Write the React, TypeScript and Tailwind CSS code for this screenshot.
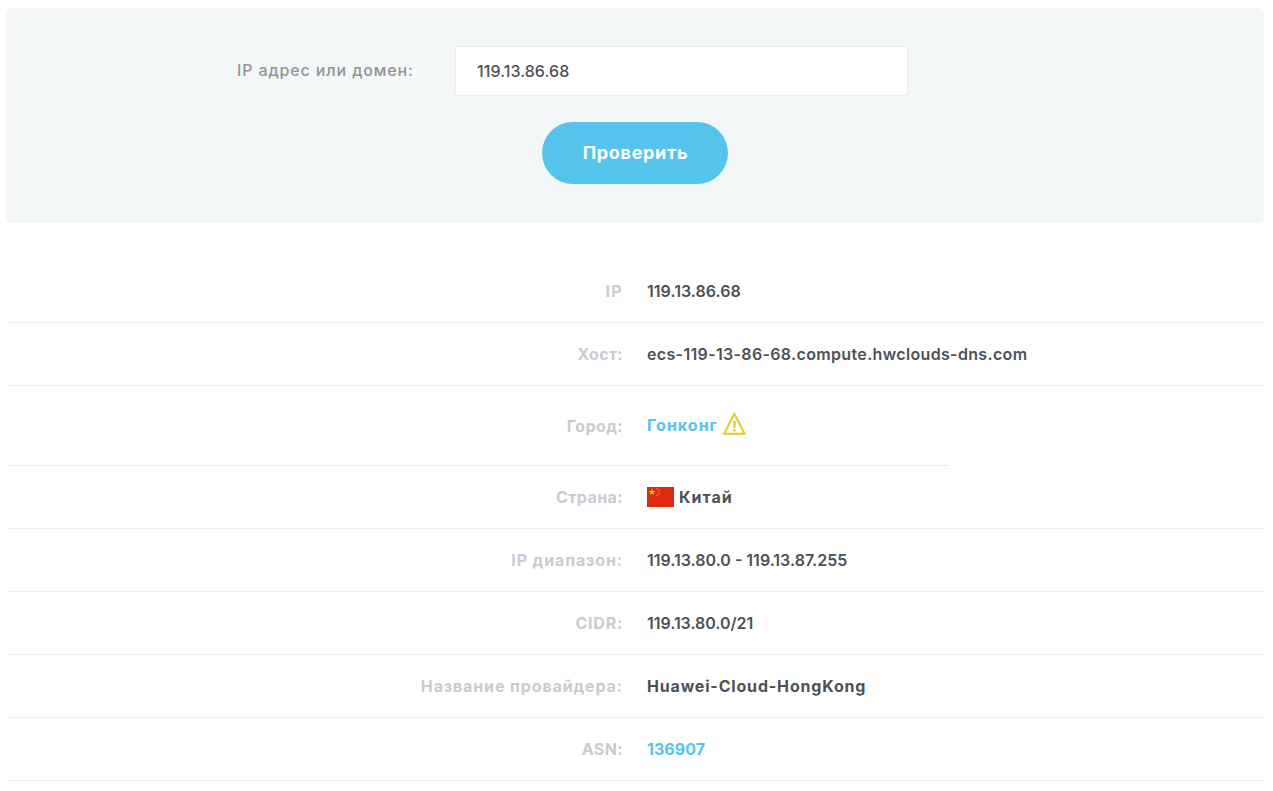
import type { ReactNode } from "react";

type RowProps = {
  label: string;
  labelSpacing: string;
  className?: string;
  children: ReactNode;
};

function Row({ label, labelSpacing, className = "h-[63px] w-full", children }: RowProps) {
  return (
    <div className={`flex items-center border-b border-[#ededee] ${className}`}>
      <div className={`w-[617px] shrink-0 text-right font-bold text-[#c8ccd1] ${labelSpacing}`}>{label}</div>
      <div className="ml-6 flex items-center whitespace-nowrap font-semibold text-[#4c5157]">{children}</div>
    </div>
  );
}

function WarningIcon() {
  return (
    <svg className="mb-[4px] ml-[4px] h-6 w-6" viewBox="0 0 24 24" fill="none" stroke="#e5cf3e">
      <path d="M12.4 1.8 22.6 21.8H2.2Z" strokeWidth="2.3" strokeLinejoin="round" />
      <path d="M12.4 9V15.8M12.4 17V19.4" strokeWidth="2.6" />
    </svg>
  );
}

function ChinaFlag() {
  return (
    <svg className="mr-[5px] h-5 w-[27px]" viewBox="0 0 27 20">
      <rect width="27" height="20" fill="#de2910" />
      <path
        fill="#ffde00"
        d="M5 1.7l.85 2.4h2.4L6.35 5.5l.77 2.3L5 6.4 2.88 7.8l.77-2.3L1.75 4.1h2.4z"
      />
      <g fill="#f3a008">
        <path d="M9.1 1.4l2-.4-.6 2z" />
        <path d="M11.2 3l2 .3-1.3 1.8z" />
        <path d="M11.3 5.8l1.9.6-1.5 1.3z" />
        <path d="M9.1 7.9l2 .1-1.1 1.8z" />
      </g>
    </svg>
  );
}

export default function App() {
  return (
    <main className="min-h-[791px] bg-white pl-[6px] pr-[9px] pt-2 font-['Inter',sans-serif] text-base leading-6">
      <form className="flex h-[215px] flex-col items-center rounded-md bg-[#f3f7f8] pt-[38px]" onSubmit={(e) => e.preventDefault()}>
        <div className="flex w-full items-center pl-[231px]">
          <label htmlFor="address" className="mb-[2px] w-[218px] whitespace-nowrap font-medium tracking-[0.87px] text-[#929496]">
            IP адрес или домен:
          </label>
          <input
            id="address"
            defaultValue="119.13.86.68"
            className="h-[50px] w-[453px] rounded-xs border border-[#ebeeef] bg-white px-[21px] font-medium tracking-[0.08px] text-[#4c5157] outline-none"
          />
        </div>
        <button className="mt-[26px] h-[62px] w-[186px] rounded-full bg-[#54c4ed] pl-[1px] text-lg font-bold tracking-[0.7px] text-white">
          Проверить
        </button>
      </form>
      <section className="mt-[37px]">
        <Row label="IP" labelSpacing="tracking-[1.3px]">
          <span className="tracking-[0.04px]">119.13.86.68</span>
        </Row>
        <Row label="Хост:" labelSpacing="tracking-[0.3px]">
          <span className="tracking-[0.34px]">ecs-119-13-86-68.compute.hwclouds-dns.com</span>
        </Row>
        <Row label="Город:" labelSpacing="tracking-[0.4px]" className="h-20 w-[943px]">
          <a href="#" className="mb-[2px] font-bold tracking-[1px] text-[#54c3ed]">Гонконг</a>
          <WarningIcon />
        </Row>
        <Row label="Страна:" labelSpacing="tracking-[0.4px]">
          <ChinaFlag />
          <span className="font-bold tracking-[1px]">Китай</span>
        </Row>
        <Row label="IP диапазон:" labelSpacing="tracking-[0.88px]">
          <span>119.13.80.0 - 119.13.87.255</span>
        </Row>
        <Row label="CIDR:" labelSpacing="tracking-[0.75px]">
          <span className="tracking-[-0.03px]">119.13.80.0/21</span>
        </Row>
        <Row label="Название провайдера:" labelSpacing="tracking-[0.88px]">
          <span className="font-bold tracking-[0.82px]">Huawei-Cloud-HongKong</span>
        </Row>
        <Row label="ASN:" labelSpacing="tracking-[0.4px]">
          <a href="#" className="font-bold tracking-[0.05px] text-[#54c3ed]">136907</a>
        </Row>
      </section>
    </main>
  );
}
